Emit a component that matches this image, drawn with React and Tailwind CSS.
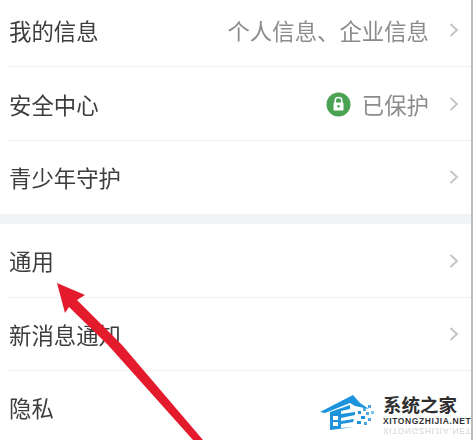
const Chevron = () => (
  <svg width="10" height="16" viewBox="0 0 10 16" fill="none" className="ml-[20px] mr-[12px] shrink-0">
    <path d="M1.5 2 L8 8 L1.5 14" stroke="#c4c4c4" strokeWidth="1.9" />
  </svg>
);

const LockBadge = () => (
  <svg width="25" height="25" viewBox="0 0 25 25" className="mr-[11px] shrink-0">
    <circle cx="12.5" cy="12.5" r="12" fill="#4aa253" />
    <path d="M9.2 11 V8.8 a3.3 3.3 0 0 1 6.6 0 V11" fill="none" stroke="#fff" strokeWidth="1.6" />
    <rect x="7.5" y="10.6" width="10" height="8" rx="1.2" fill="#fff" />
    <circle cx="12.5" cy="14.3" r="1.3" fill="#4aa253" />
  </svg>
);

const Row = ({ label, value, badge, className, divider = true, chevron = true }) => (
  <div className={`flex items-center ml-[8px] ${divider ? "border-b border-[#f0f0f0]" : ""} ${className}`}>
    <span className="ml-[1px] text-[22.4px] text-[#3d3d3d] leading-none">{label}</span>
    <div className="ml-auto flex items-center">
      {badge && <LockBadge />}
      {value && <span className="text-[22.4px] text-[#8c8c8c] leading-none">{value}</span>}
      {chevron && <Chevron />}
    </div>
  </div>
);

const Arrow = () => (
  <svg width="210" height="160" viewBox="0 0 210 160" className="absolute left-0 top-[280px]">
    <polygon points="57,3 85,15 77,20 122,65 203,160 193,160 108,65 69,27 65,33" fill="#e31b2c" />
  </svg>
);

const LogoMark = ({ className }) => (
  <svg width="60" height="36" viewBox="0 0 60 36" className={className}>
    <polygon points="1,17 34,0 41,8 50,14 36,11 31,8 6,18" fill="#1c93dc" />
    <polygon points="11,17 31,10 31,14 22,16 22,19 36,17 36,20 22,23 22,26 35,24 34,27 22,29 22,33 36,32 11,35" fill="#1c93dc" />
    <rect x="14" y="21" width="5" height="4" fill="#fff" />
    <rect x="14" y="27" width="5" height="4" fill="#fff" />
    <rect x="39" y="16" width="3" height="3" fill="#1c93dc" />
    <rect x="44" y="13" width="3" height="3" fill="#4aa9e3" />
    <rect x="49" y="10" width="3" height="3" fill="#4aa9e3" />
    <rect x="47" y="17" width="3" height="3" fill="#4aa9e3" />
    <rect x="52" y="16" width="3" height="3" fill="#7cc2ec" />
    <rect x="42" y="21" width="4" height="3" fill="#1c93dc" />
    <rect x="49" y="23" width="3" height="3" fill="#4aa9e3" />
    <rect x="38" y="26" width="4" height="3" fill="#1c93dc" />
    <rect x="45" y="27" width="3" height="3" fill="#4aa9e3" />
  </svg>
);

const Watermark = () => (
  <div className="absolute left-[319px] top-[394px] flex items-start">
    <LogoMark className="mt-[1px]" />
    <div className="ml-[4px] flex flex-col">
      <span className="text-[18.5px] leading-[20px] font-bold text-[#2e2e2e] whitespace-nowrap">系统之家</span>
      <span className="mt-[2px] text-[8.5px] leading-[10px] font-bold tracking-[0.6px] text-[#333] font-['Liberation_Sans'] whitespace-nowrap">XITONGZHIJIA.NET</span>
      <span className="text-[8.5px] leading-[10px] font-bold tracking-[0.6px] text-[#333] opacity-15 -scale-y-100 font-['Liberation_Sans'] whitespace-nowrap">XITONGZHIJIA.NET</span>
    </div>
  </div>
);

export default function App() {
  return (
    <div className="relative h-[440px] w-[474px] overflow-hidden bg-white font-['Noto_Sans_CJK_SC','Noto_Sans',sans-serif]">
      <div className="h-[440px] w-[473px] border-r-2 border-[#bdbdbd] blur-[0.6px]">
        <Row label="我的信息" value="个人信息、企业信息" className="h-[67px] pb-[6px]" />
        <Row label="安全中心" value="已保护" badge className="h-[74px] pt-[1px]" />
        <Row label="青少年守护" divider={false} className="h-[73px] pb-[1px]" />
        <div className="h-[10px] bg-[#f2f3f5]" />
        <Row label="通用" className="h-[74px]" />
        <Row label="新消息通知" className="h-[73px]" />
        <Row label="隐私" divider={false} chevron={false} className="h-[69px] pt-[4px]" />
      </div>
      <Arrow />
      <Watermark />
    </div>
  );
}
